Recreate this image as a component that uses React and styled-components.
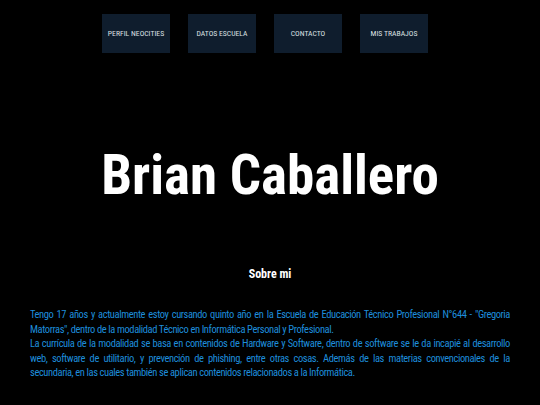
import React from 'react'
import styled, { createGlobalStyle } from 'styled-components'

const GlobalStyle = createGlobalStyle`
  html, body {
    margin: 0;
    padding: 0;
    background: #000;
  }
  body {
    font-family: Roboto, 'Liberation Sans', sans-serif;
    font-stretch: condensed;
  }
`

const Page = styled.div`
  width: 540px;
  min-height: 405px;
  background: #000;
  display: flex;
  flex-direction: column;
  align-items: center;
`

const Nav = styled.nav`
  display: flex;
  gap: 18px;
  margin-top: 14px;
  margin-left: -10px;
`

const NavButton = styled.a`
  width: 68px;
  height: 39px;
  background: #0f1d2d;
  color: #dde0e3;
  font-size: 7.7px;
  display: flex;
  align-items: center;
  justify-content: center;
  text-decoration: none;
  white-space: nowrap;
`

const Title = styled.h1`
  margin: 88px 0 0;
  color: #fff;
  font-size: 55px;
  font-weight: 700;
  line-height: 68px;
`

const Subtitle = styled.h2`
  margin: 58px 0 0;
  color: #fff;
  font-size: 12px;
  font-weight: 700;
`

const TextBlock = styled.div`
  width: 480px;
  margin-top: 27px;
`

const Paragraph = styled.p`
  margin: 0;
  color: #1e8ddb;
  font-size: 10.5px;
  letter-spacing: -0.4px;
  line-height: 14.5px;
  text-align: justify;
`

const links = ['PERFIL NEOCITIES', 'DATOS ESCUELA', 'CONTACTO', 'MIS TRABAJOS']

export default function App() {
  return (
    <Page>
      <GlobalStyle />
      <Nav>
        {links.map((l) => (
          <NavButton key={l} href='#'>
            {l}
          </NavButton>
        ))}
      </Nav>
      <Title>Brian Caballero</Title>
      <Subtitle>Sobre mi</Subtitle>
      <TextBlock>
        <Paragraph>
          Tengo 17 años y actualmente estoy cursando quinto año en la Escuela de Educación Técnico Profesional N°644 - "Gregoria Matorras", dentro de la modalidad Técnico en Informática Personal y Profesional.
        </Paragraph>
        <Paragraph>
          La currícula de la modalidad se basa en contenidos de Hardware y Software, dentro de software se le da incapié al desarrollo web, software de utilitario, y prevención de phishing, entre otras cosas. Además de las materias convencionales de la secundaria, en las cuales también se aplican contenidos relacionados a la Informática.
        </Paragraph>
      </TextBlock>
    </Page>
  )
}
